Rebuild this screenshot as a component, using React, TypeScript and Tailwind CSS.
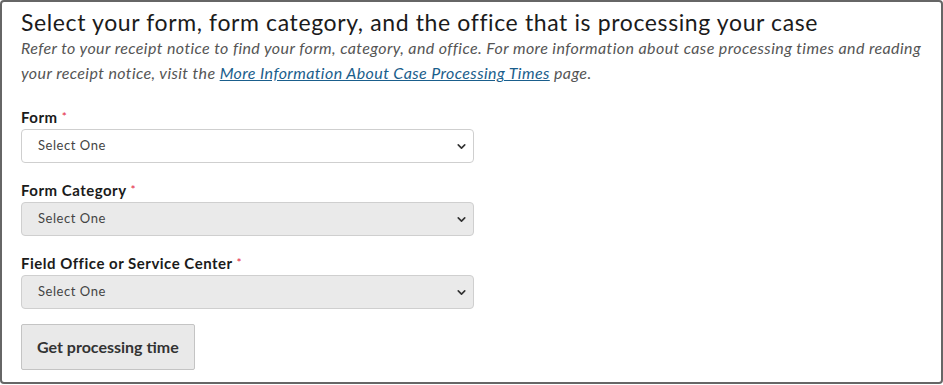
import { ChevronDown } from "lucide-react";

const fieldFont = { fontFamily: "Lato, 'Open Sans', sans-serif" };

interface SelectFieldProps {
    label: string;
    isDisabled?: boolean;
}

function SelectField({ label, isDisabled }: SelectFieldProps) {
    return (
        <div className="flex flex-col">
            <label className="mb-[2px] text-[15px] font-bold leading-[20px] tracking-[0.5px] text-[#1b1b1b]">
                {label} <span className="align-top text-[12px] font-normal text-[#e31c3d]">*</span>
            </label>
            <div
                className={`relative flex h-[34px] w-[453px] items-center rounded-[4px] border border-[#cfcfcf] pl-[16px] text-[13px] tracking-[0.55px] text-[#444] ${
                    isDisabled ? "bg-[#eaeaea]" : "bg-white"
                }`}
            >
                Select One
                <ChevronDown className="absolute right-[5px] top-[10px] size-[13px] text-[#333]" strokeWidth={3} />
            </div>
        </div>
    );
}

export default function App() {
    return (
        <div className="h-[385px] w-[943px] bg-white" style={fieldFont}>
            <div className="h-[384px] w-[943px] rounded-[4px] border-2 border-[#666] px-[19px] pt-[7px]">
                <h2 className="text-[23px] leading-[26px] tracking-[0.62px] text-[#1b1b1b]">
                    Select your form, form category, and the office that is processing your case
                </h2>
                <p className="text-[16px] italic leading-[25px] tracking-[0.4px] text-[#555]">
                    Refer to your receipt notice to find your form, category, and office. For more information about case processing times and reading
                    <br />
                    your receipt notice, visit the{" "}
                    <a className="text-[#1a5e8c] underline" href="#">
                        More Information About Case Processing Times
                    </a>{" "}
                    page.
                </p>

                <div className="mt-[22px] flex flex-col gap-[17px]">
                    <SelectField label="Form" />
                    <SelectField isDisabled label="Form Category" />
                    <SelectField isDisabled label="Field Office or Service Center" />
                </div>

                <button className="mt-[15px] h-[46px] rounded-[2px] border border-[#c4c4c4] bg-[#e9e9e9] px-[15px] text-[16px] font-bold text-[#333]">
                    Get processing time
                </button>
            </div>
        </div>
    );
}
